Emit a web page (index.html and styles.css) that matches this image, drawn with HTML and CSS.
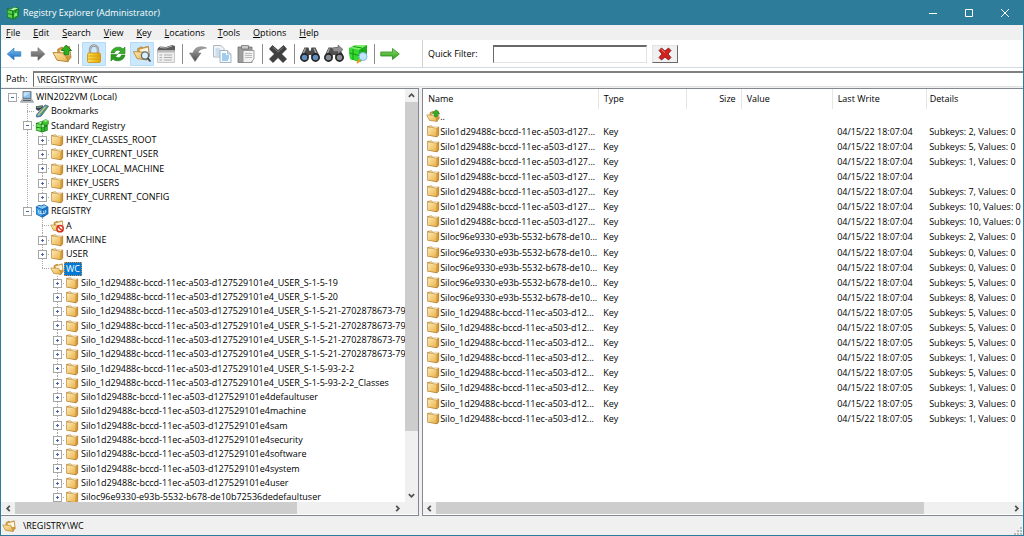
FILE: index.html
```html
<!DOCTYPE html>
<html lang="en">
<head>
<meta charset="utf-8">
<meta name="viewport" content="width=device-width, initial-scale=1">
<title>Registry Explorer (Administrator)</title>
<link rel="stylesheet" href="styles.css">
</head>
<body>
<svg class="sprite" aria-hidden="true">
  <defs>
    <linearGradient id="gFolder" x1="0" y1="0" x2="1" y2="1"><stop offset="0" stop-color="#fdeab0"/><stop offset="1" stop-color="#e9b04a"/></linearGradient>
    <linearGradient id="gBlue" x1="0" y1="0" x2="0" y2="1"><stop offset="0" stop-color="#7cc4f5"/><stop offset="1" stop-color="#1767b8"/></linearGradient>
    <linearGradient id="gGray" x1="0" y1="0" x2="0" y2="1"><stop offset="0" stop-color="#a8a8a8"/><stop offset="1" stop-color="#4c4c4c"/></linearGradient>
    <linearGradient id="gGreen" x1="0" y1="0" x2="0" y2="1"><stop offset="0" stop-color="#8be06a"/><stop offset="1" stop-color="#2f9a1c"/></linearGradient>
    <linearGradient id="gGold" x1="0" y1="0" x2="1" y2="0"><stop offset="0" stop-color="#ffe45c"/><stop offset="1" stop-color="#e5a100"/></linearGradient>
  </defs>
  <symbol id="folder" viewBox="0 0 16 16">
    <path d="M1.500 2.300 L6.500 1.800 L7.500 3 L15 3 V12.600 L12.600 15 L1.500 13.200 Z" fill="#b5822f"/>
    <path d="M2.300 3.600 L12.200 5 V14 L2.300 12.500 Z" fill="url(#gFolder)"/>
    <path d="M12.400 5 L14.300 3.700 V12.400 L12.400 14.200 Z" fill="#d59b3a"/>
    <path d="M2.500 3 L6.200 2.600 L7.200 3.800 L13.800 3.700 L12.400 4.800 Z" fill="#fff3cf"/>
  </symbol>
  <symbol id="folder-open" viewBox="0 0 16 16">
    <path d="M4.500 4.200 L8 2.400 L9.300 3.400 L14 2 L15.200 10.800 L12.500 14 L5 12 Z" fill="#d59b3a" stroke="#a87730" stroke-width=".6"/>
    <path d="M6 5 L13.600 3.200 L14.200 9 L8 9 Z" fill="#fff6dc"/>
    <path d="M.8 6.800 L10 7.200 L13 14.200 L4 13 Z" fill="url(#gFolder)" stroke="#b98a3c" stroke-width=".8"/>
  </symbol>
  <symbol id="folder-up" viewBox="0 0 16 16">
    <use href="#folder-open" width="16" height="16"/>
    <path d="M11.400 .8 L15.600 5.200 H13.400 V8.600 H9.600 V5.200 H7.300 Z" fill="#2fae22" stroke="#157a10" stroke-width=".7"/>
  </symbol>
  <symbol id="folder-denied" viewBox="0 0 16 16">
    <use href="#folder-open" width="16" height="16"/>
    <circle cx="11.500" cy="11" r="3.600" fill="#fff" stroke="#d3321d" stroke-width="1.700"/>
    <path d="M9 8.500 L14 13.500" stroke="#d3321d" stroke-width="1.700"/>
  </symbol>
  <symbol id="computer" viewBox="0 0 16 16">
    <path d="M3 1.500 H13 V10 H3 Z" fill="#44505c"/><path d="M4 2.500 H12 V9 H4 Z" fill="#8fc6ef"/><path d="M4 2.500 H12 L4 8 Z" fill="#c5e3f8"/>
    <path d="M2.500 10.500 H13.500 L15.500 14 H.5 Z" fill="#b9bfc5" stroke="#6a737b" stroke-width=".6"/><path d="M3.500 11.500 H12.500 L13 12.600 H3 Z" fill="#59626a"/>
  </symbol>
  <symbol id="bookmarks" viewBox="0 0 16 16">
    <path d="M1 2.500 L9 1.500 L9 4 L4 8 L1 6 Z" fill="#39464f"/>
    <path d="M2 3.200 L8 2.500 L7.500 4 L2 4.600 Z" fill="#7fae78"/>
    <path d="M11.500 1 L15.500 2.500 L7 14 L2 15 L1.500 12.500 Z" fill="#4c9ad2" stroke="#2b4658" stroke-width=".7"/>
    <path d="M12 3 L3.500 13" stroke="#f0cf5a" stroke-width="1.200"/>
    <path d="M7 12.500 L14.300 3" stroke="#4e9b46" stroke-width="1.500"/>
  </symbol>
  <symbol id="cubes" viewBox="0 0 16 16">
    <path d="M1 4.500 L7 2.500 L14.500 3.500 V13 L8 15.500 L1 13 Z" fill="#177d19"/>
    <path d="M1.600 5.600 L6.600 6.400 V9.600 L1.600 8.900 Z M1.600 9.900 L6.600 10.700 V14 L1.600 12.600 Z" fill="#6fe05a"/>
    <path d="M7.600 10.600 L10.400 9.800 V13.700 L7.600 14.700 Z M11.200 9.500 L14 8.500 V12.500 L11.200 13.500 Z" fill="#35b832"/>
    <path d="M7.600 6.600 L10.400 6 V9 L7.600 9.600 Z" fill="#a5f08f"/>
    <path d="M2 4.600 L6.500 3.300 L8 4 L6.800 5.600 Z" fill="#b7f5a4"/>
    <path d="M8.600 2.200 L12.400 .6 L15.400 2 V6 L12 7.400 L8.600 6 Z" fill="#43c033" stroke="#177d19" stroke-width=".5"/>
    <path d="M9.200 2.300 L12.400 1.200 L14.800 2.100 L12 3.300 Z" fill="#a6f08f"/>
  </symbol>
  <symbol id="cube-blue" viewBox="0 0 16 16">
    <path d="M1 3 L4.500 .8 L7 1.800 L10.500 .4 L15.300 3 V11.400 L8.500 15.800 L1.300 12 Z" fill="#1560a8"/>
    <path d="M1.600 4 L7.800 6.600 V14.600 L1.900 11.400 Z" fill="#3ea0e6"/><path d="M8.800 6.600 L14.600 4 V10.800 L8.800 14.600 Z" fill="#1d78ca"/>
    <path d="M2 3.200 L4.600 1.600 L7.200 2.800 L10.500 1.200 L14 3.200 L8.200 5.600 Z" fill="#86cbf6"/>
    <path d="M4.200 7 V9.400 M6.600 7.800 V10 M10 7.800 V10 M12.200 7 V9.400 M4 10 L8.200 11.400 L12.400 10" stroke="#e2f4ff" stroke-width="1" fill="none"/>
  </symbol>
  <symbol id="appcube" viewBox="0 0 16 16">
    <path d="M1 2.500 L6 3 L9 .8 L14.800 2 L14.500 12 L8.600 15.600 L1.500 13 Z" fill="#137a18"/>
    <path d="M1.800 4.800 L7 6 V14.300 L2.200 12.400 Z" fill="#5ad44c"/><path d="M8.600 6 L13.900 4.400 L13.500 11.600 L8.600 14.500 Z" fill="#31b432"/>
    <path d="M2 3.400 L6 3.800 L9 1.600 L14 2.600 L8.200 5 Z" fill="#b9f7a9"/>
    <path d="M2 8.600 L7.800 10 L13.800 8 M11.200 5 V13" stroke="#0f6915" stroke-width=".9" fill="none"/>
    <path d="M9.500 8.500 L12.500 7.500 V11 L9.500 12.500 Z" fill="#8bef78"/>
  </symbol>
</svg>

<div class="window">
  <header class="titlebar">
    <svg class="ic14"><use href="#appcube"/></svg>
    <h1>Registry Explorer (Administrator)</h1>
    <div class="caption">
      <button type="button" aria-label="Minimize"><svg viewBox="0 0 10 10"><path d="M1 5.500H9"/></svg></button>
      <button type="button" aria-label="Maximize"><svg viewBox="0 0 10 10"><path d="M1.500 1.500H8.500V8.500H1.500Z"/></svg></button>
      <button type="button" aria-label="Close"><svg viewBox="0 0 10 10"><path d="M1 1L9 9M9 1L1 9"/></svg></button>
    </div>
  </header>

  <nav class="menubar">
    <button type="button"><u>F</u>ile</button><button type="button"><u>E</u>dit</button><button type="button"><u>S</u>earch</button><button type="button"><u>V</u>iew</button><button type="button"><u>K</u>ey</button><button type="button"><u>L</u>ocations</button><button type="button"><u>T</u>ools</button><button type="button"><u>O</u>ptions</button><button type="button"><u>H</u>elp</button>
  </nav>

  <div class="toolbar">
    <div class="tools">
      <button type="button" class="small" aria-label="Back"><svg viewBox="0 0 20 20"><path d="M2.500 10L10 3.500V7.500H17.500V12.500H10V16.500Z" fill="url(#gBlue)" stroke="#2c7cc4" stroke-width=".8"/></svg></button>
      <button type="button" class="small" aria-label="Forward"><svg viewBox="0 0 20 20"><path d="M17.500 10L10 3V7.500H2.500V12.500H10V17Z" fill="url(#gGray)" stroke="#6a6a6a" stroke-width=".8"/></svg></button>
      <button type="button" aria-label="Up"><svg viewBox="0 0 16 16"><use href="#folder-up"/></svg></button>
      <i class="sep"></i>
      <button type="button" class="on" aria-label="Read only" aria-pressed="true"><svg viewBox="0 0 20 20"><path d="M6 10V6a4 4.500 0 0 1 8 0V10" fill="none" stroke="#8a8a8a" stroke-width="2.400"/><path d="M6 10V6a4 4.500 0 0 1 8 0V10" fill="none" stroke="#dcdcdc" stroke-width=".8"/><rect x="3.500" y="9" width="13" height="9.500" rx="1.500" fill="url(#gGold)" stroke="#c98d00" stroke-width=".8"/><path d="M4 12H16M4 15H16" stroke="#d29a0a" stroke-width=".8"/></svg></button>
      <button type="button" aria-label="Refresh"><svg viewBox="0 0 20 20"><path d="M3 9C4 3 12 1.500 15 5L17 3V9.500H10.500L12.500 7.400C10 5.300 7 6.500 6.500 9Z" fill="#3aad2c" stroke="#1f7f18" stroke-width=".6"/><path d="M17 11C16 17 8 18.500 5 15L3 17V10.500H9.500L7.500 12.600C10 14.700 13 13.500 13.500 11Z" fill="#2c9a22" stroke="#1f7f18" stroke-width=".6"/></svg></button>
      <button type="button" class="on" aria-label="Key view" aria-pressed="true"><svg viewBox="0 0 20 20"><use href="#folder-open" x="0" y="0" width="19" height="18"/><circle cx="13" cy="11.500" r="3.600" fill="#dcefff" stroke="#5b6b7a" stroke-width="1.300"/><path d="M15.600 14.200L18.500 17.500" stroke="#444" stroke-width="1.800"/></svg></button>
      <button type="button" aria-label="Columns"><svg viewBox="0 0 20 20"><path d="M2 4L4 2.500L10 3L16 1L19 2V7H1Z" fill="#5c5c5c"/><path d="M4 3.500L10 4L16 2" stroke="#b0b0b0" fill="none"/><path d="M1.500 6.500H18.500V18.500H1.500Z" fill="#ededed" stroke="#b5b5b5" stroke-width=".7"/><path d="M1.500 6.500H18.500V8.500H1.500Z" fill="#b9b9b9"/><path d="M3.500 11H6M8 11H16M3.500 13.500H6M8 13.500H16M3.500 16H6M8 16H16" stroke="#b0b0b0"/></svg></button>
      <i class="sep"></i>
      <button type="button" aria-label="Undo"><svg viewBox="0 0 20 20"><path d="M18.500 4C13 1.500 6.500 3 5 9H1.500L7 17.500L13 9H10C10.500 6 14 4.500 18.500 4Z" fill="url(#gGray)" stroke="#777" stroke-width=".6"/></svg></button>
      <button type="button" aria-label="Copy"><svg viewBox="0 0 20 20"><path d="M1.500 1.500H9L12 4.500V13H1.500Z" fill="#eef3f7" stroke="#9baab6" stroke-width=".8"/><path d="M3.500 5H8M3.500 7H8M3.500 9H8M3.500 11H8" stroke="#9ec6e8" stroke-width=".9"/><path d="M8 6.500H15.500L19 10V18.500H8Z" fill="#f6fbff" stroke="#8fa2b2" stroke-width=".8"/><path d="M15.500 6.500V10H19" fill="#d3e2ee" stroke="#8fa2b2" stroke-width=".6"/><path d="M10 10H14M10 12H17M10 14H17M10 16H16" stroke="#4b9de0"/></svg></button>
      <button type="button" aria-label="Paste"><svg viewBox="0 0 20 20"><path d="M2 3H16V18.500H2Z" fill="#9d9d9d" stroke="#707070" stroke-width=".8"/><path d="M5.500 1.500H12.500V5H5.500Z" fill="#c9c9c9" stroke="#666" stroke-width=".7"/><path d="M7 6.500H18V15L15 18.500H7Z" fill="#f1f1f1" stroke="#8b8b8b" stroke-width=".8"/><path d="M9 9.500H16M9 11.500H16M9 13.500H16" stroke="#b4b4b4" stroke-width=".9"/></svg></button>
      <i class="sep"></i>
      <button type="button" aria-label="Delete"><svg viewBox="0 0 20 20"><path d="M4.500 1.500L10 6.500L15.500 1.500L18.500 5L13.500 10L18.500 15L15 18.500L10 13.500L5 18.500L1.500 15L6.500 10L1.500 5Z" fill="#414141" stroke="#222" stroke-width=".7"/><path d="M4.500 3L10 8L15.500 3" fill="none" stroke="#7c7c7c"/></svg></button>
      <i class="sep"></i>
      <button type="button" aria-label="Find"><svg viewBox="0 0 20 20"><path d="M4.500 3.500H8.500L9.500 7H10.500L11.500 3.500H15.500L19.500 12V15H12L11 11H9L8 15H.5V12Z" fill="#4a4a4a"/><path d="M5.500 4.500L3 10M14 4.500L16.500 10" stroke="#a8a8a8" stroke-width="1.300"/><circle cx="4.500" cy="13.500" r="3.600" fill="#5f8fc0" stroke="#222" stroke-width="1.600"/><circle cx="15.500" cy="13.500" r="3.600" fill="#5f8fc0" stroke="#222" stroke-width="1.600"/></svg></button>
      <button type="button" aria-label="Find next"><svg viewBox="0 0 20 20"><path d="M4.500 3.500H8.500L9.500 7H10.500L11.500 3.500H15.500L19.500 12V15H12L11 11H9L8 15H.5V12Z" fill="#505050"/><path d="M5.500 4.500L3 10" stroke="#a8a8a8" stroke-width="1.300"/><circle cx="4.500" cy="13.500" r="3.600" fill="#888e94" stroke="#222" stroke-width="1.600"/><circle cx="15.500" cy="13.500" r="3.600" fill="#888e94" stroke="#222" stroke-width="1.600"/><path d="M9.500 3.500H14V1L19 5.500L14 10V7.500H9.500Z" fill="#909090" stroke="#555" stroke-width=".6"/></svg></button>
      <button type="button" aria-label="Find all"><svg viewBox="0 0 20 20"><path d="M1 4L8 1H19L19 13L12 18L2 15Z" fill="#1cae1c"/><path d="M1 4L11 6V17.500L2 15Z" fill="#35d92f"/><path d="M1.500 4L8 1H19L11 6Z" fill="#7df06c"/><path d="M5 5V16M1.500 9L11 11.500L19 7M14 4.500V16M5 2.500L14 4" stroke="#159a15" fill="none"/><path d="M12.500 15L9 19" stroke="#f09a1c" stroke-width="2"/><circle cx="15" cy="12.500" r="4" fill="#bfe6fb" stroke="#7fb8dc"/></svg></button>
      <i class="sep"></i>
      <button type="button" aria-label="Go to"><svg viewBox="0 0 20 20"><path d="M.8 8H12.500V4.500L19.300 10L12.500 15.500V12H.8Z" fill="url(#gGreen)" stroke="#2b8c1c" stroke-width=".8"/></svg></button>
    </div>
    <div class="filter">
      <label for="filter">Quick Filter:</label>
      <input id="filter" type="text">
      <button type="button" class="clear" aria-label="Clear filter"><svg viewBox="0 0 14 14"><path d="M3.500 1L7 4L10.500 1L13 3.500L10 7L13 10.500L10.500 13L7 10L3.500 13L1 10.500L4 7L1 3.500Z" fill="#d4211f" stroke="#74140f" stroke-width=".8"/><path d="M3.500 2.500L7 5.500" stroke="#f08c7c"/></svg></button>
    </div>
  </div>

  <div class="path">
    <label for="path">Path:</label>
    <input id="path" type="text" value="\REGISTRY\WC">
  </div>

  <main class="panes">
    <section class="pane left">
      <div class="upper">
        <ul class="tree">
          <li class="d0"><button type="button" class="x minus root" aria-label="Collapse"></button><svg><use href="#computer"/></svg><span>WIN2022VM (Local)</span></li>
          <li class="d1"><i class="x"></i><svg><use href="#bookmarks"/></svg><span>Bookmarks</span></li>
          <li class="d1"><button type="button" class="x minus" aria-label="Collapse"></button><svg><use href="#cubes"/></svg><span>Standard Registry</span></li>
          <li class="d2 g"><button type="button" class="x plus" aria-label="Expand"></button><svg><use href="#folder"/></svg><span>HKEY_CLASSES_ROOT</span></li>
          <li class="d2 g"><button type="button" class="x plus" aria-label="Expand"></button><svg><use href="#folder"/></svg><span>HKEY_CURRENT_USER</span></li>
          <li class="d2 g"><button type="button" class="x plus" aria-label="Expand"></button><svg><use href="#folder"/></svg><span>HKEY_LOCAL_MACHINE</span></li>
          <li class="d2 g"><button type="button" class="x plus" aria-label="Expand"></button><svg><use href="#folder"/></svg><span>HKEY_USERS</span></li>
          <li class="d2 g"><button type="button" class="x plus end" aria-label="Expand"></button><svg><use href="#folder"/></svg><span>HKEY_CURRENT_CONFIG</span></li>
          <li class="d1"><button type="button" class="x minus end" aria-label="Collapse"></button><svg><use href="#cube-blue"/></svg><span>REGISTRY</span></li>
          <li class="d2"><i class="x"></i><svg><use href="#folder-denied"/></svg><span>A</span></li>
          <li class="d2"><button type="button" class="x plus" aria-label="Expand"></button><svg><use href="#folder"/></svg><span>MACHINE</span></li>
          <li class="d2"><button type="button" class="x plus" aria-label="Expand"></button><svg><use href="#folder"/></svg><span>USER</span></li>
          <li class="d2"><i class="x end"></i><svg><use href="#folder-open"/></svg><span class="sel">WC</span></li>
          <li class="d3"><button type="button" class="x plus" aria-label="Expand"></button><svg><use href="#folder"/></svg><span>Silo_1d29488c-bccd-11ec-a503-d127529101e4_USER_S-1-5-19</span></li>
          <li class="d3"><button type="button" class="x plus" aria-label="Expand"></button><svg><use href="#folder"/></svg><span>Silo_1d29488c-bccd-11ec-a503-d127529101e4_USER_S-1-5-20</span></li>
          <li class="d3"><button type="button" class="x plus" aria-label="Expand"></button><svg><use href="#folder"/></svg><span>Silo_1d29488c-bccd-11ec-a503-d127529101e4_USER_S-1-5-21-2702878673-79</span></li>
          <li class="d3"><button type="button" class="x plus" aria-label="Expand"></button><svg><use href="#folder"/></svg><span>Silo_1d29488c-bccd-11ec-a503-d127529101e4_USER_S-1-5-21-2702878673-79</span></li>
          <li class="d3"><button type="button" class="x plus" aria-label="Expand"></button><svg><use href="#folder"/></svg><span>Silo_1d29488c-bccd-11ec-a503-d127529101e4_USER_S-1-5-21-2702878673-79</span></li>
          <li class="d3"><button type="button" class="x plus" aria-label="Expand"></button><svg><use href="#folder"/></svg><span>Silo_1d29488c-bccd-11ec-a503-d127529101e4_USER_S-1-5-21-2702878673-79</span></li>
          <li class="d3"><button type="button" class="x plus" aria-label="Expand"></button><svg><use href="#folder"/></svg><span>Silo_1d29488c-bccd-11ec-a503-d127529101e4_USER_S-1-5-93-2-2</span></li>
          <li class="d3"><button type="button" class="x plus" aria-label="Expand"></button><svg><use href="#folder"/></svg><span>Silo_1d29488c-bccd-11ec-a503-d127529101e4_USER_S-1-5-93-2-2_Classes</span></li>
          <li class="d3"><button type="button" class="x plus" aria-label="Expand"></button><svg><use href="#folder"/></svg><span>Silo1d29488c-bccd-11ec-a503-d127529101e4defaultuser</span></li>
          <li class="d3"><button type="button" class="x plus" aria-label="Expand"></button><svg><use href="#folder"/></svg><span>Silo1d29488c-bccd-11ec-a503-d127529101e4machine</span></li>
          <li class="d3"><button type="button" class="x plus" aria-label="Expand"></button><svg><use href="#folder"/></svg><span>Silo1d29488c-bccd-11ec-a503-d127529101e4sam</span></li>
          <li class="d3"><button type="button" class="x plus" aria-label="Expand"></button><svg><use href="#folder"/></svg><span>Silo1d29488c-bccd-11ec-a503-d127529101e4security</span></li>
          <li class="d3"><button type="button" class="x plus" aria-label="Expand"></button><svg><use href="#folder"/></svg><span>Silo1d29488c-bccd-11ec-a503-d127529101e4software</span></li>
          <li class="d3"><button type="button" class="x plus" aria-label="Expand"></button><svg><use href="#folder"/></svg><span>Silo1d29488c-bccd-11ec-a503-d127529101e4system</span></li>
          <li class="d3"><button type="button" class="x plus" aria-label="Expand"></button><svg><use href="#folder"/></svg><span>Silo1d29488c-bccd-11ec-a503-d127529101e4user</span></li>
          <li class="d3"><button type="button" class="x plus" aria-label="Expand"></button><svg><use href="#folder"/></svg><span>Siloc96e9330-e93b-5532-b678-de10b72536dedefaultuser</span></li>
        </ul>
        <div class="vscroll">
          <button type="button" aria-label="Scroll up"><svg viewBox="0 0 8 8"><path d="M1 5.500L4 2.500L7 5.500"/></svg></button>
          <div class="track"><div class="thumb"></div><div class="rest"></div></div>
          <button type="button" aria-label="Scroll down"><svg viewBox="0 0 8 8"><path d="M1 2.500L4 5.500L7 2.500"/></svg></button>
        </div>
      </div>
      <div class="hscroll tree-h">
        <button type="button" aria-label="Scroll left"><svg viewBox="0 0 8 8"><path d="M5.500 1L2.500 4L5.500 7"/></svg></button>
        <div class="track"><div class="thumb"></div><div class="rest"></div></div>
        <button type="button" aria-label="Scroll right"><svg viewBox="0 0 8 8"><path d="M2.500 1L5.500 4L2.500 7"/></svg></button>
      </div>
    </section>

    <section class="pane right">
      <div class="list">
        <table>
          <colgroup><col class="c-name"><col class="c-type"><col class="c-size"><col class="c-value"><col class="c-write"><col></colgroup>
          <thead><tr><th>Name</th><th>Type</th><th class="r">Size</th><th>Value</th><th>Last Write</th><th>Details</th></tr></thead>
          <tbody>
            <tr><td><svg><use href="#folder-up"/></svg>..</td><td></td><td></td><td></td><td></td><td></td></tr>
            <tr><td><svg><use href="#folder"/></svg>Silo1d29488c-bccd-11ec-a503-d127...</td><td>Key</td><td></td><td></td><td>04/15/22 18:07:04</td><td>Subkeys: 2, Values: 0</td></tr>
            <tr><td><svg><use href="#folder"/></svg>Silo1d29488c-bccd-11ec-a503-d127...</td><td>Key</td><td></td><td></td><td>04/15/22 18:07:04</td><td>Subkeys: 5, Values: 0</td></tr>
            <tr><td><svg><use href="#folder"/></svg>Silo1d29488c-bccd-11ec-a503-d127...</td><td>Key</td><td></td><td></td><td>04/15/22 18:07:04</td><td>Subkeys: 1, Values: 0</td></tr>
            <tr><td><svg><use href="#folder"/></svg>Silo1d29488c-bccd-11ec-a503-d127...</td><td>Key</td><td></td><td></td><td>04/15/22 18:07:04</td><td></td></tr>
            <tr><td><svg><use href="#folder"/></svg>Silo1d29488c-bccd-11ec-a503-d127...</td><td>Key</td><td></td><td></td><td>04/15/22 18:07:04</td><td>Subkeys: 7, Values: 0</td></tr>
            <tr><td><svg><use href="#folder"/></svg>Silo1d29488c-bccd-11ec-a503-d127...</td><td>Key</td><td></td><td></td><td>04/15/22 18:07:04</td><td>Subkeys: 10, Values: 0</td></tr>
            <tr><td><svg><use href="#folder"/></svg>Silo1d29488c-bccd-11ec-a503-d127...</td><td>Key</td><td></td><td></td><td>04/15/22 18:07:04</td><td>Subkeys: 10, Values: 0</td></tr>
            <tr><td><svg><use href="#folder"/></svg>Siloc96e9330-e93b-5532-b678-de10...</td><td>Key</td><td></td><td></td><td>04/15/22 18:07:04</td><td>Subkeys: 2, Values: 0</td></tr>
            <tr><td><svg><use href="#folder"/></svg>Siloc96e9330-e93b-5532-b678-de10...</td><td>Key</td><td></td><td></td><td>04/15/22 18:07:04</td><td>Subkeys: 0, Values: 0</td></tr>
            <tr><td><svg><use href="#folder"/></svg>Siloc96e9330-e93b-5532-b678-de10...</td><td>Key</td><td></td><td></td><td>04/15/22 18:07:04</td><td>Subkeys: 0, Values: 0</td></tr>
            <tr><td><svg><use href="#folder"/></svg>Siloc96e9330-e93b-5532-b678-de10...</td><td>Key</td><td></td><td></td><td>04/15/22 18:07:04</td><td>Subkeys: 5, Values: 0</td></tr>
            <tr><td><svg><use href="#folder"/></svg>Siloc96e9330-e93b-5532-b678-de10...</td><td>Key</td><td></td><td></td><td>04/15/22 18:07:04</td><td>Subkeys: 8, Values: 0</td></tr>
            <tr><td><svg><use href="#folder"/></svg>Silo_1d29488c-bccd-11ec-a503-d12...</td><td>Key</td><td></td><td></td><td>04/15/22 18:07:05</td><td>Subkeys: 5, Values: 0</td></tr>
            <tr><td><svg><use href="#folder"/></svg>Silo_1d29488c-bccd-11ec-a503-d12...</td><td>Key</td><td></td><td></td><td>04/15/22 18:07:05</td><td>Subkeys: 5, Values: 0</td></tr>
            <tr><td><svg><use href="#folder"/></svg>Silo_1d29488c-bccd-11ec-a503-d12...</td><td>Key</td><td></td><td></td><td>04/15/22 18:07:05</td><td>Subkeys: 5, Values: 0</td></tr>
            <tr><td><svg><use href="#folder"/></svg>Silo_1d29488c-bccd-11ec-a503-d12...</td><td>Key</td><td></td><td></td><td>04/15/22 18:07:05</td><td>Subkeys: 1, Values: 0</td></tr>
            <tr><td><svg><use href="#folder"/></svg>Silo_1d29488c-bccd-11ec-a503-d12...</td><td>Key</td><td></td><td></td><td>04/15/22 18:07:05</td><td>Subkeys: 5, Values: 0</td></tr>
            <tr><td><svg><use href="#folder"/></svg>Silo_1d29488c-bccd-11ec-a503-d12...</td><td>Key</td><td></td><td></td><td>04/15/22 18:07:05</td><td>Subkeys: 1, Values: 0</td></tr>
            <tr><td><svg><use href="#folder"/></svg>Silo_1d29488c-bccd-11ec-a503-d12...</td><td>Key</td><td></td><td></td><td>04/15/22 18:07:05</td><td>Subkeys: 3, Values: 0</td></tr>
            <tr><td><svg><use href="#folder"/></svg>Silo_1d29488c-bccd-11ec-a503-d12...</td><td>Key</td><td></td><td></td><td>04/15/22 18:07:05</td><td>Subkeys: 1, Values: 0</td></tr>
          </tbody>
        </table>
      </div>
      <div class="hscroll list-h">
        <button type="button" aria-label="Scroll left"><svg viewBox="0 0 8 8"><path d="M5.500 1L2.500 4L5.500 7"/></svg></button>
        <div class="track"><div class="thumb"></div><div class="rest"></div></div>
        <button type="button" aria-label="Scroll right"><svg viewBox="0 0 8 8"><path d="M2.500 1L5.500 4L2.500 7"/></svg></button>
      </div>
    </section>
  </main>

  <footer class="status">
    <svg class="ic14"><use href="#folder-open"/></svg>
    <span>\REGISTRY\WC</span>
    <svg class="grip" viewBox="0 0 8 8"><path d="M6 0h2v2h-2zM3 3h2v2h-2zM6 3h2v2h-2zM0 6h2v2h-2zM3 6h2v2h-2zM6 6h2v2h-2z" fill="#bdbdbd"/></svg>
  </footer>
</div>
</body>
</html>
```
FILE: styles.css
```css
* { box-sizing: border-box; }

body {
  margin: 0;
  font: 9px/14px "Open Sans", "Noto Sans", sans-serif;
  color: #000;
  overflow: hidden;
}

button, input {
  font: inherit;
  color: inherit;
  border: 0;
  padding: 0;
  margin: 0;
  background: none;
  border-radius: 0;
}

svg { display: block; flex: none; }
.sprite { position: absolute; width: 0; height: 0; }
.ic14 { width: 14px; height: 14px; }

.window {
  display: flex;
  flex-direction: column;
  height: 100vh;
  border: 1px solid #2d7d9a;
  border-top: 0;
  background: #f0f0f0;
}

.titlebar {
  display: flex;
  align-items: center;
  gap: 3px;
  height: 25px;
  padding-left: 5px;
  background: #2d7d9a;
  color: #fff;
}
.titlebar h1 { margin: 0; font-size: 9px; font-weight: 400; }
.caption { display: flex; margin-left: auto; }
.caption button { width: 36px; height: 24px; display: grid; place-items: center; }
.caption svg { width: 10px; height: 10px; fill: none; stroke: #fff; stroke-width: 1; }

.menubar { display: flex; height: 15px; }
.menubar button { padding: 0 8px 0 5px; white-space: nowrap; }

.toolbar {
  display: flex;
  height: 28px;
  background: #fff;
  border-bottom: 1px solid #d5dbe2;
}
.tools {
  display: flex;
  align-items: center;
  width: 422px;
  flex: none;
  padding-left: 1px;
  border-right: 1px solid #d0d0d0;
}
.tools button { width: 24px; height: 24px; display: grid; place-items: center; }
.tools button svg { width: 20px; height: 20px; }
.tools .small svg { width: 18px; height: 18px; }
.tools .on { background: #cce8ff; box-shadow: inset 0 0 0 1px #b5dcf8; }
.sep { width: 1px; height: 20px; margin: 0 3px 0 4px; background: #8c8c8c; }

.filter { display: flex; align-items: center; padding-left: 5px; flex: 1; min-width: 0; }
.filter label { width: 65px; flex: none; }
.filter input {
  width: 154px;
  height: 18px;
  border: 1px solid #e3e3e3;
  border-top: 2px solid #696969;
  border-left: 1px solid #696969;
}
.clear {
  display: grid;
  place-items: center;
  width: 26px;
  height: 18px;
  margin-left: 5px;
  background: #f0f0f0;
  border: 1px solid #e3e3e3;
  border-right-color: #696969;
  border-bottom-color: #696969;
}
.clear svg { width: 14px; height: 14px; }

.path { display: flex; align-items: center; height: 20px; padding-top: 2px; background: #fff; border-bottom: 1px solid #f0f0f0; }
.path label { width: 32px; padding-left: 5px; flex: none; }
.path input {
  flex: 1;
  min-width: 0;
  height: 16px;
  padding-left: 3px;
  border-top: 2px solid #808080;
  border-left: 1px solid #696969;
  border-bottom: 1px solid #e3e3e3;
}

.panes { display: flex; gap: 3px; flex: 1; min-height: 0; }
.pane {
  display: flex;
  flex-direction: column;
  min-width: 0;
  background: #fff;
  border: 1px solid #828790;
}
.left { flex: 418 1 0; border-left: 0; }
.right { flex: 601 1 0; border-right: 0; }
.upper { display: flex; flex: 1; min-height: 0; }

.tree { list-style: none; margin: 0; padding: 1px 0 0; flex: 1; min-width: 0; overflow: hidden; }
.tree li { display: flex; align-items: center; height: 14px; padding-left: 4px; white-space: nowrap; }
.tree li:nth-child(7n+3), .tree li:nth-child(7n+6) { height: 15px; }
.tree .d1 { padding-left: 19px; }
.tree .d2 { padding-left: 34px; }
.tree .d3 { padding-left: 49px; }
.tree li.g { background: repeating-linear-gradient(#a8a8a8 0 1px, transparent 1px 2px) 26px 0 / 1px 100% no-repeat; }
.tree li > svg { width: 14px; height: 14px; }
.tree span { padding: 0 2px; line-height: 14px; }
.tree span.sel { background: #0078d7; color: #fff; outline: 1px dotted #e08a3c; outline-offset: -1px; }

.x {
  display: grid;
  place-items: center;
  flex: none;
  width: 15px;
  height: 100%;
  background:
    repeating-linear-gradient(#a8a8a8 0 1px, transparent 1px 2px) 7px 0 / 1px 100% no-repeat,
    repeating-linear-gradient(90deg, #a8a8a8 0 1px, transparent 1px 2px) 7px 50% / 8px 1px no-repeat;
}
.x.end { background-size: 1px 50%, 8px 1px; }
.x.root { background-size: 0 0, 8px 1px; }
.x.plus::before, .x.minus::before {
  content: "";
  width: 7px;
  height: 7px;
  border: 1px solid #a6a6a6;
  background: linear-gradient(#4a67ad, #4a67ad) 50% 50% / 3px 1px no-repeat, #fff;
}
.x.plus::before {
  background:
    linear-gradient(#4a67ad, #4a67ad) 50% 50% / 3px 1px no-repeat,
    linear-gradient(#4a67ad, #4a67ad) 50% 50% / 1px 3px no-repeat,
    #fff;
}

.vscroll, .hscroll { display: flex; background: #f0f0f0; }
.vscroll { flex-direction: column; width: 13px; }
.vscroll button { height: 13px; display: grid; place-items: center; }
.hscroll { height: 13px; border-bottom: 1px solid #fff; }
.hscroll button { width: 13px; display: grid; place-items: center; }
.vscroll svg, .hscroll svg { width: 7px; height: 7px; fill: none; stroke: #505050; stroke-width: 2; }
.track { display: flex; flex: 1; }
.vscroll .track { flex-direction: column; }
.thumb { background: #cdcdcd; }
.vscroll .thumb { flex: 328; }
.vscroll .rest { flex: 58; }
.tree-h { padding: 0 14px 0 1px; }
.tree-h .thumb { flex: 281; }
.tree-h .rest { flex: 94; }
.list-h .thumb { flex: 486; }
.list-h .rest { flex: 86; }

.list { flex: 1; min-height: 0; overflow: hidden; }
table { width: 100%; table-layout: fixed; border-collapse: collapse; }
.c-name { width: 175px; }
.c-type { width: 88px; }
.c-size { width: 55px; }
.c-value { width: 91px; }
.c-write { width: 94px; }
th { height: 20px; padding: 0 5px; text-align: left; font-weight: 400; border-right: 1px solid #e5e5e5; }
th:last-child { border-right: 0; }
.r { text-align: right; }
td { height: 15px; padding: 0 0 0 5px; white-space: nowrap; line-height: 15px; overflow: hidden; }
tr:nth-child(10n) td { height: 16px; }
td svg { width: 14px; height: 14px; float: left; }
td:first-child { padding-left: 3px; }
th:last-child, td:last-child { padding-left: 3px; padding-right: 0; }

.status { display: flex; align-items: center; gap: 7px; height: 19px; padding: 1px 1px 0 1px; }
.grip { width: 8px; height: 8px; margin-left: auto; align-self: flex-end; }
```
